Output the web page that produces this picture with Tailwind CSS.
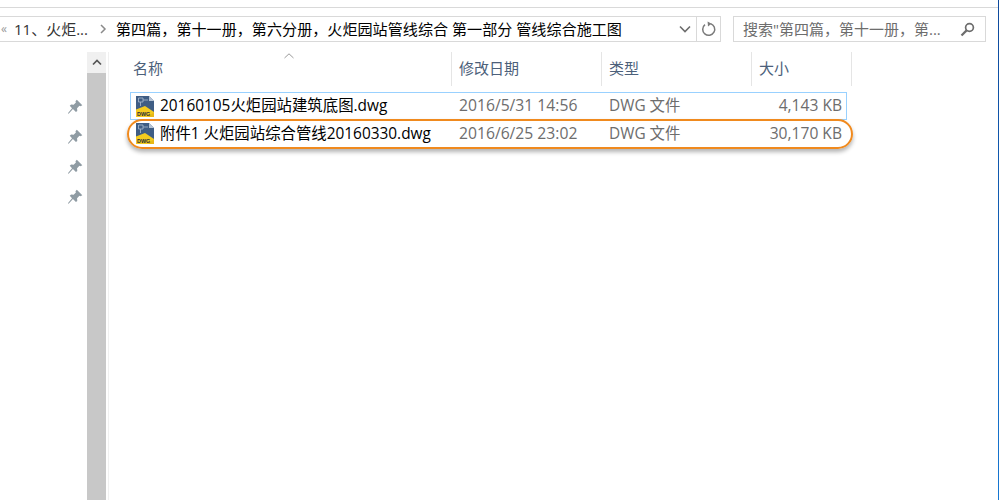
<!DOCTYPE html>
<html lang="zh-CN">
<head>
<meta charset="UTF-8">
<title>第四篇</title>
<script src="https://cdn.jsdelivr.net/npm/@tailwindcss/browser@4"></script>
</head>
<body class="bg-white w-[1000px] h-[500px] overflow-hidden font-['Open_Sans','Noto_Sans_CJK_SC',sans-serif] text-[15px] flex">

<svg width="0" height="0" class="absolute">
  <defs>
    <symbol id="pin" viewBox="0 0 14 14">
      <path d="M8.6 0.6 L13.4 5.4 L11.8 6.4 L10.9 6 L8.8 8.2 L9 10.4 L7.8 11.4 L5.2 8.8 L1.4 13 L0.8 12.4 L4.4 8.2 L2.4 5.8 L3.6 4.9 L5.8 5 L7.8 3 L7.4 2 Z" fill="#8f9ba3"/>
    </symbol>
    <symbol id="dwg" viewBox="0 0 20 23">
      <path d="M1 1 H14 L19 6 V22 H1 Z" fill="#3f5d84"/>
      <path d="M14 1 L19 6 H14 Z" fill="#b5c4d6"/>
      <path d="M3.5 3 H8 V7 H3.5 Z M8 5 H13 M5.5 7 V11" fill="none" stroke="#a9bbd0" stroke-width="0.8"/>
      <path d="M1 22 V14.5 L10 11 L19 17 V22 Z" fill="#f4cb1f"/>
      <path d="M13 22 L19 17 V22 Z" fill="#e8b815"/>
      <text x="2" y="20.5" font-family="Liberation Sans" font-size="5.4" font-weight="700" fill="#1f2a3a">DWG</text>
    </symbol>
  </defs>
</svg>

<div class="h-[500px] flex flex-col w-[998px] shrink-0">
  <div class="h-2 border-b border-[#d9d9d9] shrink-0"></div>

  <!-- address bar and search -->
  <div class="flex mt-2 h-[26px] shrink-0">
    <div class="w-[721px] flex items-center border border-l-0 border-[#d9d9d9] text-[15px] text-black">
      <span class="w-[14px] pl-[1px] text-[#999] text-[12px]">«</span>
      <span class="w-[81px] text-[#333] whitespace-nowrap">11、火炬...</span>
      <svg width="8" height="10" viewBox="0 0 8 10" class="mr-[9px] ml-[4px]"><path d="M2 1 L6 5 L2 9" fill="none" stroke="#8a8a8a" stroke-width="1.5"/></svg>
      <span class="whitespace-nowrap text-[15.1px]">第四篇，第十一册，第六分册，火炬园站管线综合 第一部分 管线综合施工图</span>
      <div class="ml-auto flex items-center h-full">
        <svg width="12" height="8" viewBox="0 0 12 8" class="mr-[5px]"><path d="M1 1.5 L6 6.5 L11 1.5" fill="none" stroke="#6d6d6d" stroke-width="1.6"/></svg>
        <div class="w-[24px] h-full border-l border-[#d9d9d9] flex items-center justify-center">
          <svg width="16" height="16" viewBox="0 0 16 16"><path d="M9.5 2.6 A6 6 0 1 1 4 3.6" fill="none" stroke="#7a7a7a" stroke-width="1.5"/><path d="M6.6 0.6 L10.6 2.8 L7 5.6 Z" fill="#7a7a7a"/></svg>
        </div>
      </div>
    </div>
    <div class="ml-3 w-[253px] flex items-center justify-between border border-[#d9d9d9] pl-[9px] pr-[10px] text-[15px] text-[#6d6d6d]">
      <span class="whitespace-nowrap">搜索"第四篇，第十一册，第...</span>
      <svg width="15" height="15" viewBox="0 0 15 15"><circle cx="9.5" cy="5.5" r="3.9" fill="none" stroke="#6d6d6d" stroke-width="1.7"/><path d="M6.6 8.4 L1.5 13.5" stroke="#6d6d6d" stroke-width="2.2"/></svg>
    </div>
  </div>

  <div class="flex flex-1 mt-[10px] min-h-0">
    <!-- quick access pins -->
    <div class="w-[87px] pt-[47px] flex flex-col items-end pr-[4px] gap-[14px] shrink-0">
      <svg width="16" height="16"><use href="#pin"/></svg>
      <svg width="16" height="16"><use href="#pin"/></svg>
      <svg width="16" height="16"><use href="#pin"/></svg>
      <svg width="16" height="16"><use href="#pin"/></svg>
    </div>

    <!-- scrollbar -->
    <div class="w-[22px] shrink-0 border-r border-[#f0f0f0] pr-[2px]">
      <div class="h-full bg-[#c8c8c8]">
        <div class="h-[21px] bg-[#f0f0f0] flex items-center justify-center">
          <svg width="10" height="7" viewBox="0 0 10 7"><path d="M1 5.5 L5 1.5 L9 5.5" fill="none" stroke="#555" stroke-width="1.7"/></svg>
        </div>
      </div>
    </div>

    <!-- file list -->
    <div class="flex-1 pl-[21px] relative">
      <svg width="10" height="6" viewBox="0 0 10 6" class="absolute left-[175px] top-[1px]"><path d="M0.5 5 L5 0.8 L9.5 5" fill="none" stroke="#9a9a9a"/></svg>
      <div class="flex h-[34px] text-[15px] text-[#4c607a]">
        <div class="w-[322px] pl-[3px] pt-[5px] border-r border-[#e5e5e5]">名称</div>
        <div class="w-[150px] pl-[7px] pt-[5px] border-r border-[#e5e5e5]">修改日期</div>
        <div class="w-[150px] pl-[7px] pt-[5px] border-r border-[#e5e5e5]">类型</div>
        <div class="w-[100px] pl-[7px] pt-[5px] border-r border-[#e5e5e5]">大小</div>
      </div>

      <div class="mt-[6px] w-[717px] h-[28px] flex items-center border border-[#99d1ff]">
        <svg width="20" height="23" class="ml-[4px] shrink-0"><use href="#dwg"/></svg>
        <span class="w-[297px] pl-[5px] text-black whitespace-nowrap text-[15.4px]">20160105火炬园站建筑底图.dwg</span>
        <span class="w-[150px] pl-[7px] text-[#6d6d6d] whitespace-nowrap text-[15.7px]">2016/5/31 14:56</span>
        <span class="w-[100px] pl-[7px] text-[#6d6d6d] whitespace-nowrap text-[15.4px]">DWG 文件</span>
        <span class="w-[144px] pr-[4px] text-right text-[#6d6d6d] whitespace-nowrap text-[15.6px]">4,143 KB</span>
      </div>
      <div class="relative w-[717px] h-[27px] flex items-center px-[1px]">
        <svg width="20" height="23" class="ml-[4px] shrink-0"><use href="#dwg"/></svg>
        <span class="w-[297px] pl-[5px] text-black whitespace-nowrap text-[15.4px]">附件1 火炬园站综合管线20160330.dwg</span>
        <span class="w-[150px] pl-[7px] text-[#6d6d6d] whitespace-nowrap text-[15.7px]">2016/6/25 23:02</span>
        <span class="w-[100px] pl-[7px] text-[#6d6d6d] whitespace-nowrap text-[15.4px]">DWG 文件</span>
        <span class="w-[144px] pr-[4px] text-right text-[#6d6d6d] whitespace-nowrap text-[15.6px]">30,170 KB</span>
        <div class="absolute -left-[3px] -right-[6px] -top-[1px] h-[30px] rounded-[15px] border-2 border-[#f08a1e] shadow-[0_3px_4px_rgba(0,0,0,0.3)]"></div>
      </div>
    </div>
  </div>
</div>

<!-- window edge -->
<div class="w-px h-[500px] shrink-0 bg-linear-to-b from-[#0f4a9c] to-[#1677d2]"></div>
</body>
</html>
